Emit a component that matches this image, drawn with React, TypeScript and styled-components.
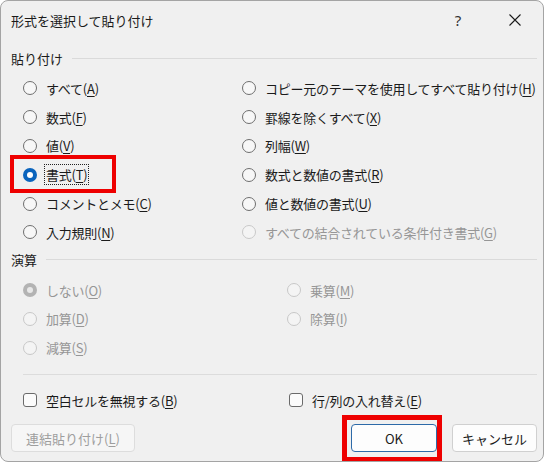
import React from "react";
import styled, { createGlobalStyle, css } from "styled-components";

const Global = createGlobalStyle`
  html, body { margin: 0; padding: 0; background: #ffffff; }
  body { font-family: "Noto Sans CJK JP", "Noto Sans", sans-serif; color: #1b1b1b; }
  * { box-sizing: border-box; }
`;

const Dialog = styled.div`
  width: 544px;
  height: 462px;
  border: 1px solid #a4a4a4;
  border-radius: 8px;
  background: #f0f0f0;
  display: flex;
  flex-direction: column;
  font-size: 13px;
  overflow: hidden;
`;

const TitleBar = styled.div`
  height: 37px;
  display: flex;
  align-items: center;
  padding-left: 10px;
`;

const Title = styled.div`
  flex: 1;
  font-size: 13px;
  color: #1b1b1b;
  padding-top: 1px;
`;

const TitleButton = styled.div<{ $w: number }>`
  width: ${(p) => p.$w}px;
  height: 37px;
  display: flex;
  align-items: center;
  justify-content: center;
  font-family: "Noto Sans", sans-serif;
  font-size: 15px;
  color: #333;
`;

const Body = styled.div`
  padding: 0 6px 0 10px;
  display: flex;
  flex-direction: column;
  flex: 1;
`;

const GroupHeader = styled.div<{ $mt: number }>`
  display: flex;
  align-items: center;
  height: 20px;
  margin-top: ${(p) => p.$mt}px;
  gap: 9px;
  &::after {
    content: "";
    flex: 1;
    height: 1px;
    background: #dadada;
  }
`;

const Grid = styled.div<{ $cols: string; $mt: number }>`
  display: grid;
  grid-template-columns: ${(p) => p.$cols};
  grid-auto-rows: 28.8px;
  margin-top: ${(p) => p.$mt}px;
  padding-left: 12px;
`;

const Option = styled.div<{ $disabled?: boolean; $col?: number; $row?: number }>`
  position: relative;
  display: flex;
  align-items: center;
  gap: 7px;
  color: ${(p) => (p.$disabled ? "#969696" : "#1b1b1b")};
  white-space: nowrap;
  ${(p) => p.$col && css`grid-column: ${p.$col};`}
  ${(p) => p.$row && css`grid-row: ${p.$row};`}
`;

const RadioCircle = styled.span<{ $checked?: boolean; $disabled?: boolean }>`
  width: 14px;
  height: 14px;
  border-radius: 50%;
  flex: none;
  display: flex;
  align-items: center;
  justify-content: center;
  ${(p) =>
    p.$checked
      ? css`
          background: ${p.$disabled ? "#b3b3b3" : "#0a64bd"};
          &::after {
            content: "";
            width: 6px;
            height: 6px;
            border-radius: 50%;
            background: ${p.$disabled ? "#e8e8e8" : "#ffffff"};
          }
        `
      : css`
          background: ${p.$disabled ? "#f4f4f4" : "#f7f7f7"};
          border: 1px solid ${p.$disabled ? "#c8c8c8" : "#6e6e6e"};
        `}
`;

const CheckBox = styled.span`
  width: 14px;
  height: 14px;
  border-radius: 3px;
  border: 1px solid #6a6a6a;
  background: #fbfbfb;
  flex: none;
`;

const Label = styled.span<{ $focus?: boolean }>`
  padding: 0 1px;
  line-height: 19px;
  letter-spacing: -0.25px;
  border: 1px dotted ${(p) => (p.$focus ? "#222" : "transparent")};
  u { text-underline-offset: 2px; }
`;

const Annot = styled.div<{ $l: number; $t: number; $w: number; $h: number; $b: number }>`
  position: absolute;
  left: ${(p) => p.$l}px;
  top: ${(p) => p.$t}px;
  width: ${(p) => p.$w}px;
  height: ${(p) => p.$h}px;
  border: ${(p) => p.$b}px solid #ee0000;
  pointer-events: none;
`;

const Separator = styled.div`
  height: 1px;
  background: #dcdcdc;
  margin: 12px 0 0 12px;
`;

const CheckRow = styled.div`
  display: grid;
  grid-template-columns: 266px 1fr;
  height: 26px;
  margin-top: 12px;
  padding-left: 12px;
`;

const ButtonRow = styled.div`
  display: flex;
  align-items: center;
  margin-top: 11px;
`;

const Button = styled.div<{ $w: number; $disabled?: boolean; $primary?: boolean; $ml?: number }>`
  position: relative;
  width: ${(p) => p.$w}px;
  height: 28px;
  margin-left: ${(p) => p.$ml ?? 0}px;
  display: flex;
  align-items: center;
  justify-content: center;
  border-radius: 4px;
  background: ${(p) => (p.$disabled ? "#f6f6f6" : "#fdfdfd")};
  border: 1px solid ${(p) => (p.$primary ? "#2d6aa8" : p.$disabled ? "#dddddd" : "#d0d0d0")};
  color: ${(p) => (p.$disabled ? "#9e9e9e" : "#1b1b1b")};
  font-size: 13px;
  u { text-underline-offset: 2px; }
`;

type Opt = { text: string; key: string; checked?: boolean; disabled?: boolean; focus?: boolean };

const paste: Opt[][] = [
  [
    { text: "すべて", key: "A" },
    { text: "数式", key: "F" },
    { text: "値", key: "V" },
    { text: "書式", key: "T", checked: true, focus: true },
    { text: "コメントとメモ", key: "C" },
    { text: "入力規則", key: "N" },
  ],
  [
    { text: "コピー元のテーマを使用してすべて貼り付け", key: "H" },
    { text: "罫線を除くすべて", key: "X" },
    { text: "列幅", key: "W" },
    { text: "数式と数値の書式", key: "R" },
    { text: "値と数値の書式", key: "U" },
    { text: "すべての結合されている条件付き書式", key: "G", disabled: true },
  ],
];

const ops: Opt[][] = [
  [
    { text: "しない", key: "O", checked: true, disabled: true },
    { text: "加算", key: "D", disabled: true },
    { text: "減算", key: "S", disabled: true },
  ],
  [
    { text: "乗算", key: "M", disabled: true },
    { text: "除算", key: "I", disabled: true },
  ],
];

function RadioOpt({ o, col, row }: { o: Opt; col: number; row: number }) {
  return (
    <Option $disabled={o.disabled} $col={col} $row={row}>
      <RadioCircle $checked={o.checked} $disabled={o.disabled} />
      <Label $focus={o.focus}>
        {o.text}(<u>{o.key}</u>)
      </Label>
      {o.focus && <Annot $l={-13} $t={-5} $w={106} $h={38} $b={4} />}
    </Option>
  );
}

export default function App() {
  return (
    <>
      <Global />
      <Dialog>
        <TitleBar>
          <Title>形式を選択して貼り付け</Title>
          <TitleButton $w={58}>?</TitleButton>
          <TitleButton $w={56}>
            <svg width="12" height="12" viewBox="0 0 12 12">
              <path d="M0.5 0.5 L11.5 11.5 M11.5 0.5 L0.5 11.5" stroke="#1b1b1b" strokeWidth="1.1" fill="none" />
            </svg>
          </TitleButton>
        </TitleBar>
        <Body>
          <GroupHeader $mt={10}>貼り付け</GroupHeader>
          <Grid $cols="219px 1fr" $mt={6}>
            {paste.map((col, ci) =>
              col.map((o, ri) => <RadioOpt key={o.key} o={o} col={ci + 1} row={ri + 1} />)
            )}
          </Grid>
          <GroupHeader $mt={3}>演算</GroupHeader>
          <Grid $cols="264px 1fr" $mt={6}>
            {ops.map((col, ci) =>
              col.map((o, ri) => <RadioOpt key={o.key} o={o} col={ci + 1} row={ri + 1} />)
            )}
          </Grid>
          <Separator />
          <CheckRow>
            <Option>
              <CheckBox />
              <Label>
                空白セルを無視する(<u>B</u>)
              </Label>
            </Option>
            <Option>
              <CheckBox />
              <Label>
                行/列の入れ替え(<u>E</u>)
              </Label>
            </Option>
          </CheckRow>
          <ButtonRow>
            <Button $w={124} $disabled>
              連結貼り付け(<u>L</u>)
            </Button>
            <Button $w={86} $primary $ml={216}>
              OK
              <Annot $l={-10} $t={-10} $w={100} $h={47} $b={5} />
            </Button>
            <Button $w={85} $ml={15}>
              キャンセル
            </Button>
          </ButtonRow>
        </Body>
      </Dialog>
    </>
  );
}
